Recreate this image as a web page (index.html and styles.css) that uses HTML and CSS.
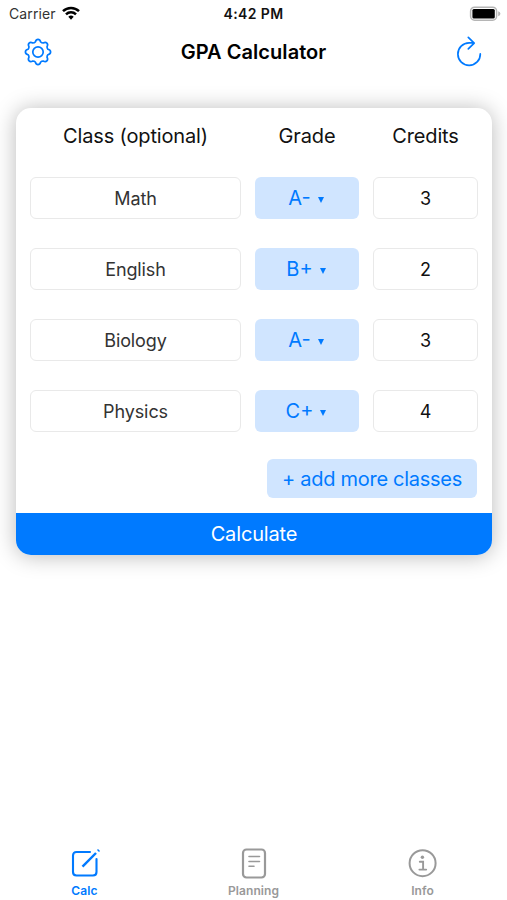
FILE: index.html
```html
<!DOCTYPE html>
<html lang="en">
<head>
    <meta charset="UTF-8">
    <meta name="viewport" content="width=device-width, initial-scale=1.0">
    <title>GPA Calculator</title>
    <link rel="stylesheet" href="styles.css">
</head>
<body>
    <!-- Status bar -->
    <div class="status-bar">
        <div class="carrier">
            <span>Carrier</span>
            <svg width="18" height="14" viewBox="0 0 18 14" fill="none" stroke="#000" stroke-width="2.5">
                <path d="M1 5.2a11.4 11.4 0 0 1 16 0"/>
                <path d="M4 8.4a7.1 7.1 0 0 1 10 0"/>
                <path d="M6.3 10.8a3.9 3.9 0 0 1 5.4 0L9 13.7z" fill="#000" stroke="none"/>
            </svg>
        </div>
        <span class="time">4:42 PM</span>
        <svg class="battery" width="32" height="16" viewBox="0 0 32 16">
            <rect x="1.6" y="1.2" width="26" height="13" rx="4" fill="#fff" stroke="#b5b5b5" stroke-width="1.5"/>
            <rect x="3.4" y="3" width="22.4" height="9.4" rx="1.5" fill="#000"/>
            <path d="M29.2 5.2q2.2.8 2.2 2.5t-2.2 2.5z" fill="#b5b5b5"/>
        </svg>
    </div>

    <!-- Navigation -->
    <header class="nav-bar">
        <button class="icon-button" aria-label="Settings">
            <svg width="28" height="28" viewBox="-14 -14 28 28">
                <path d="M-2.7-10Q-1.9-12.6 0-12.6T2.7-10Q3.6-9.1 5.2-9Q7.5-10.3 8.9-8.900T9-5.2Q9.1-3.6 10-2.7Q12.6-1.9 12.6 0T10 2.7Q9.1 3.6 9 5.2Q10.3 7.5 8.9 8.9T5.2 9Q3.6 9.1 2.7 10Q1.9 12.6 0 12.6T-2.7 10Q-3.6 9.1-5.2 9Q-7.5 10.3-8.9 8.9T-9 5.2Q-9.1 3.6-10 2.7Q-12.6 1.9-12.6 0T-10-2.7Q-9.1-3.6-9-5.2Q-10.3-7.5-8.9-8.9T-5.2-9Q-3.6-9.1-2.7-10z"/>
                <circle r="5.2"/>
            </svg>
        </button>
        <h1>GPA Calculator</h1>
        <button class="icon-button" aria-label="Reset">
            <svg width="28" height="32" viewBox="0 0 28 32">
                <path d="M25.3 17.9A11.2 11.2 0 1 1 14.1 6.9H18.5M13.3 1.4L19.2 7.1L13.3 12.900"/>
            </svg>
        </button>
    </header>

    <!-- Class list -->
    <main class="card">
        <div class="grid">
            <div class="heading">Class (optional)</div>
            <div class="heading">Grade</div>
            <div class="heading">Credits</div>

            <div class="field name">Math</div>
            <button class="grade">A-<span class="arrow"></span></button>
            <div class="field">3</div>

            <div class="field name">English</div>
            <button class="grade">B+<span class="arrow"></span></button>
            <div class="field">2</div>

            <div class="field name">Biology</div>
            <button class="grade">A-<span class="arrow"></span></button>
            <div class="field">3</div>

            <div class="field name">Physics</div>
            <button class="grade">C+<span class="arrow"></span></button>
            <div class="field">4</div>
        </div>
        <button class="add-button">+ add more classes</button>
        <button class="calculate-button">Calculate</button>
    </main>

    <!-- Tabs -->
    <nav class="tab-bar">
        <div class="tab active">
            <svg width="32" height="32" viewBox="0 0 32 32">
                <path d="M21 5H7.500Q4 5 4 8.500V25Q4 28.500 7.500 28.500H24Q27.500 28.500 27.500 25V12" stroke-width="2.100"/>
                <path d="M13.500 19.600L27 6" stroke-width="2.400" stroke-linecap="butt"/>
                <path d="M29 3.900L30 2.900" stroke-width="2.800" stroke-linecap="butt"/>
            </svg>
            <span>Calc</span>
        </div>
        <div class="tab">
            <svg width="32" height="32" viewBox="0 0 32 32">
                <rect x="5" y="2.500" width="22" height="28" rx="3.500" stroke-width="2.200"/>
                <path d="M11 9.500H21.500M11 14.500H21.500M11 19.300H16" stroke-width="1.600"/>
            </svg>
            <span>Planning</span>
        </div>
        <div class="tab">
            <svg width="32" height="32" viewBox="0 0 32 32">
                <circle cx="15.600" cy="16.200" r="13" stroke-width="2"/>
                <circle cx="15.400" cy="10.200" r="1.700" fill="currentColor" stroke="none"/>
                <path d="M12.800 14.800H16.100V22.300M12.400 22.600H19.200" stroke-width="1.900"/>
            </svg>
            <span>Info</span>
        </div>
    </nav>
</body>
</html>
```

FILE: styles.css
```css
* {
    box-sizing: border-box;
}
body {
    margin: 0;
    height: 900px;
    display: flex;
    flex-direction: column;
    overflow: hidden;
    background: #fff;
    color: #111;
    font-family: Inter, "Liberation Sans", sans-serif;
}
button {
    border: none;
    padding: 0;
    background: none;
    font-family: inherit;
    color: #007aff;
    cursor: pointer;
}
svg {
    display: block;
}
.status-bar {
    display: grid;
    grid-template-columns: 1fr auto 1fr;
    align-items: center;
    height: 27px;
    padding: 0 6px 0 9px;
    font-size: 14px;
}
.carrier {
    display: flex;
    align-items: center;
    gap: 6px;
    color: #333;
    letter-spacing: 0.1px;
}
.carrier svg {
    margin-top: -2px;
}
.time {
    margin-right: 3px;
    font-weight: 600;
    font-size: 14px;
    letter-spacing: 0.4px;
}
.battery {
    justify-self: end;
}
.nav-bar {
    display: flex;
    align-items: center;
    justify-content: space-between;
    height: 50px;
    padding: 0 24px;
}
.nav-bar h1 {
    margin: 0;
    font-size: 20px;
    font-weight: 600;
    letter-spacing: 0.05px;
    color: #000;
}
.icon-button svg {
    fill: none;
    stroke: #007aff;
    stroke-width: 1.7;
    stroke-linecap: round;
    stroke-linejoin: round;
}
.card {
    display: flex;
    flex-direction: column;
    margin: 31px 15px 0 16px;
    border-radius: 15px;
    background: #fff;
    box-shadow: 0 1px 22px rgba(0, 0, 0, 0.28);
}
.grid {
    display: grid;
    grid-template-columns: 211px 104px 105px;
    grid-template-rows: 40px repeat(4, 42px);
    gap: 29px 14px;
    padding: 0 14px;
}
.heading {
    align-self: end;
    line-height: 24px;
    text-align: center;
    font-size: 20px;
    letter-spacing: -0.15px;
}
.field {
    display: flex;
    align-items: center;
    justify-content: center;
    border: 1px solid #e9e9e9;
    border-radius: 6px;
    font-size: 18px;
    color: #111;
}
.field.name {
    color: #333;
    letter-spacing: -0.1px;
}
.grade {
    display: flex;
    align-items: center;
    justify-content: center;
    gap: 7px;
    padding-right: 2px;
    border-radius: 6px;
    background: #d0e5ff;
    font-size: 20px;
}
.arrow {
    margin-top: 3px;
    border: 3px solid transparent;
    border-top: 6px solid #007aff;
    border-bottom: none;
}
.add-button {
    align-self: flex-end;
    width: 210px;
    height: 39px;
    margin: 27px 15px 15px;
    border-radius: 6px;
    background: #d0e5ff;
    font-size: 20px;
    letter-spacing: -0.28px;
}
.calculate-button {
    height: 42px;
    border-radius: 0 0 15px 15px;
    background: #007aff;
    color: #fff;
    font-size: 20px;
    letter-spacing: -0.15px;
}
.tab-bar {
    display: grid;
    grid-template-columns: repeat(3, 1fr);
    margin-top: auto;
    height: 53px;
}
.tab {
    display: flex;
    flex-direction: column;
    align-items: center;
    gap: 4px;
    color: #999;
    font-size: 12px;
    line-height: 15px;
    font-weight: 600;
    letter-spacing: 0.1px;
}
.tab.active {
    color: #007aff;
}
.tab svg {
    fill: none;
    stroke: currentColor;
    stroke-linecap: round;
}
```
